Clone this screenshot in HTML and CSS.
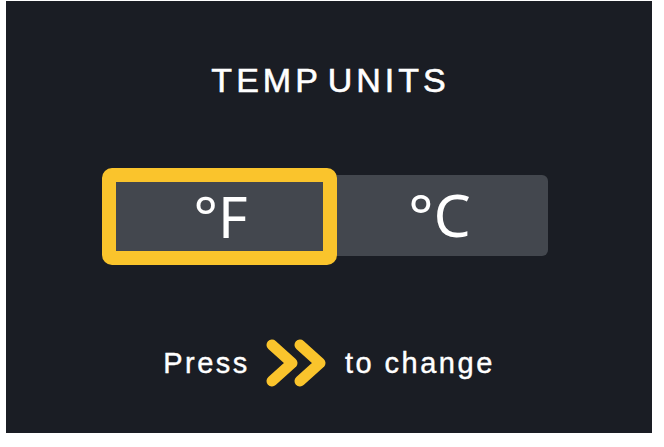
FILE: index.html
```html
<!DOCTYPE html>
<html>
<head>
<meta charset="utf-8">
<link rel="stylesheet" href="styles.css">
</head>
<body>
<div class="panel">
  <h1 class="title">TEMP UNITS</h1>
  <div class="track">
    <div class="cell selected">°F</div>
    <div class="cell celsius">°C</div>
  </div>
  <div class="hint">
    <span class="word">Press</span>
    <svg class="chev" width="60" height="48" viewBox="0 0 60 48">
      <polyline points="6,6 26,24 6,42" />
      <polyline points="34,6 54,24 34,42" />
    </svg>
    <span class="word">to change</span>
  </div>
</div>
</body>
</html>
```
FILE: styles.css
```css
html, body {
  margin: 0;
  padding: 0;
  background: #ffffff;
}
body {
  font-family: "Liberation Sans", Arial, sans-serif;
}
.panel {
  margin: 1px 0 0 6px;
  width: 646px;
  height: 432px;
  background: #1a1d24;
  display: flex;
  flex-direction: column;
  align-items: center;
  padding-top: 59px;
  box-sizing: border-box;
  color: #ffffff;
}
.title {
  margin: 0 0 0 3px;
  font-size: 34px;
  line-height: 40px;
  font-weight: normal;
  letter-spacing: 4px;
  word-spacing: -7px;
  -webkit-text-stroke: 0.6px #ffffff;
}
.track {
  margin-top: 75px;
  width: 438px;
  height: 81px;
  background: #43474e;
  border-radius: 6px;
  display: flex;
}
.cell {
  flex: 1;
  display: flex;
  align-items: center;
  justify-content: center;
  font-family: "Noto Sans", "Liberation Sans", sans-serif;
  font-size: 57px;
  line-height: 1;
}
.cell.celsius {
  font-size: 59px;
  padding-right: 6px;
  padding-bottom: 2px;
}
.cell.selected {
  flex: 0 0 235px;
  box-sizing: border-box;
  margin: -7px 0 -9px -8px;
  border: 14px solid #fac42c;
  border-radius: 10px;
  background: #43474e;
  padding-left: 2px;
}
.hint {
  margin-top: 83px;
  height: 48px;
  display: flex;
  align-items: center;
  font-size: 29px;
  letter-spacing: 2.5px;
  -webkit-text-stroke: 0.4px #ffffff;
}
.chev {
  display: block;
  margin: 0 19px 0 16px;
}
.chev polyline {
  fill: none;
  stroke: #fac42c;
  stroke-width: 11;
  stroke-linecap: round;
  stroke-linejoin: round;
}
```
